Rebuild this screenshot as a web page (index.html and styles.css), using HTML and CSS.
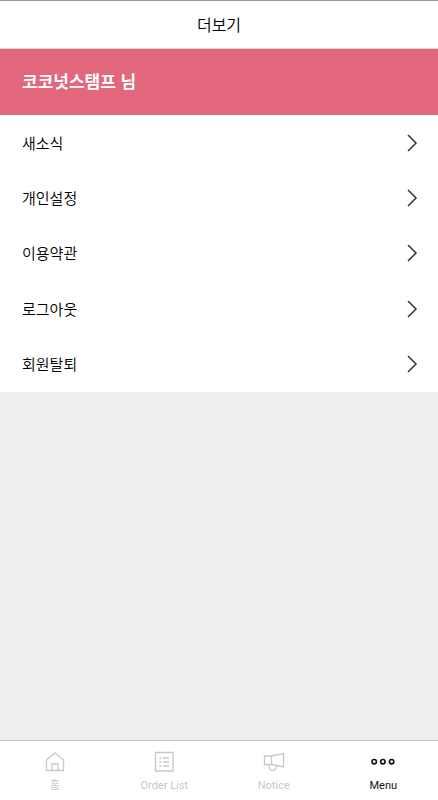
FILE: index.html
```html
<!DOCTYPE html>
<html lang="ko">
<head>
    <meta charset="UTF-8">
    <meta name="viewport" content="width=device-width, initial-scale=1.0">
    <title>더보기</title>
    <link rel="stylesheet" href="styles.css">
</head>
<body>
    <header class="header">
        <h1>더보기</h1>
    </header>

    <main class="content">
        <div class="profile">코코넛스탬프 님</div>

        <ul class="menu">
            <li>
                <a href="#news">새소식
                    <svg class="arrow" width="12" height="18" viewBox="0 0 12 18"><path d="M2 1l8 8-8 8"/></svg>
                </a>
            </li>
            <li>
                <a href="#settings">개인설정
                    <svg class="arrow" width="12" height="18" viewBox="0 0 12 18"><path d="M2 1l8 8-8 8"/></svg>
                </a>
            </li>
            <li>
                <a href="#terms">이용약관
                    <svg class="arrow" width="12" height="18" viewBox="0 0 12 18"><path d="M2 1l8 8-8 8"/></svg>
                </a>
            </li>
            <li>
                <a href="#logout">로그아웃
                    <svg class="arrow" width="12" height="18" viewBox="0 0 12 18"><path d="M2 1l8 8-8 8"/></svg>
                </a>
            </li>
            <li>
                <a href="#leave">회원탈퇴
                    <svg class="arrow" width="12" height="18" viewBox="0 0 12 18"><path d="M2 1l8 8-8 8"/></svg>
                </a>
            </li>
        </ul>
    </main>

    <nav class="tabs">
        <a class="tab" href="#home">
            <svg width="24" height="24" viewBox="0 0 24 24">
                <path d="M3.500 10L12 2.800l8.500 7.200v10.500h-17z"/>
                <path d="M9 20.500v-6.500h6v6.500"/>
            </svg>
            <span>홈</span>
        </a>
        <a class="tab" href="#orders">
            <svg width="24" height="24" viewBox="0 0 24 24">
                <path d="M3.500 2.500h17.500v18.500h-17.500z"/>
                <path d="M7.500 8h2M11 8h6M7.500 12h2M11 12h6M7.500 16h2M11 16h6"/>
            </svg>
            <span>Order List</span>
        </a>
        <a class="tab" href="#notice">
            <svg width="24" height="24" viewBox="0 0 24 24">
                <path d="M2.500 6h7v8.500h-7zM9.500 6l12-2.500v13.500l-12-2.500"/>
                <path d="M7 14.500v2a3.800 3.800 0 0 0 7.600 0v-1"/>
            </svg>
            <span>Notice</span>
        </a>
        <a class="tab active" href="#menu">
            <svg width="24" height="24" viewBox="0 0 24 24">
                <circle cx="3.200" cy="11.700" r="2.200"/>
                <circle cx="11.900" cy="11.700" r="2.200"/>
                <circle cx="20.600" cy="11.700" r="2.200"/>
            </svg>
            <span>Menu</span>
        </a>
    </nav>
</body>
</html>
```
FILE: styles.css
```css
* {
    box-sizing: border-box;
}

body {
    margin: 0;
    min-height: 100vh;
    display: flex;
    flex-direction: column;
    font-family: "Noto Sans CJK KR", sans-serif;
    background: #eee;
    color: #000;
}

a {
    color: inherit;
    text-decoration: none;
}

.header {
    height: 49px;
    padding-bottom: 2px;
    display: flex;
    align-items: center;
    justify-content: center;
    background: #fff;
    border-top: 1px solid #999;
    border-bottom: 1px solid #e8ccd1;
}

.header h1 {
    margin: 0;
    font-size: 16px;
    line-height: 24px;
    font-weight: 350;
}

.content {
    flex: 1;
}

.profile {
    padding: 20px 22px 22px;
    background: #e2667c;
    color: #fff;
    font-size: 17px;
    line-height: 24px;
    font-weight: 700;
}

.menu {
    margin: 0;
    padding: 0;
    min-height: 277px;
    display: grid;
    grid-auto-rows: 1fr;
    list-style: none;
    background: #fff;
}

.menu a {
    height: 100%;
    padding: 0 20px 0 22px;
    display: flex;
    align-items: center;
    justify-content: space-between;
    font-size: 15px;
    line-height: 24px;
    font-weight: 350;
}

.arrow {
    fill: none;
    stroke: #333;
    stroke-width: 1.5;
}

.tabs {
    height: 60px;
    display: flex;
    background: #fff;
    border-top: 1px solid #c8c8c8;
}

.tab {
    flex: 1;
    padding-top: 9px;
    display: flex;
    flex-direction: column;
    align-items: center;
    gap: 4px;
    color: #c8c8c8;
    font-family: Roboto, "Noto Sans CJK KR", sans-serif;
    font-size: 11px;
    line-height: 16px;
}

.tab svg {
    fill: none;
    stroke: currentColor;
    stroke-width: 1.3;
}

.tab.active {
    color: #111;
}

.tab.active svg {
    stroke-width: 1.6;
}
```
